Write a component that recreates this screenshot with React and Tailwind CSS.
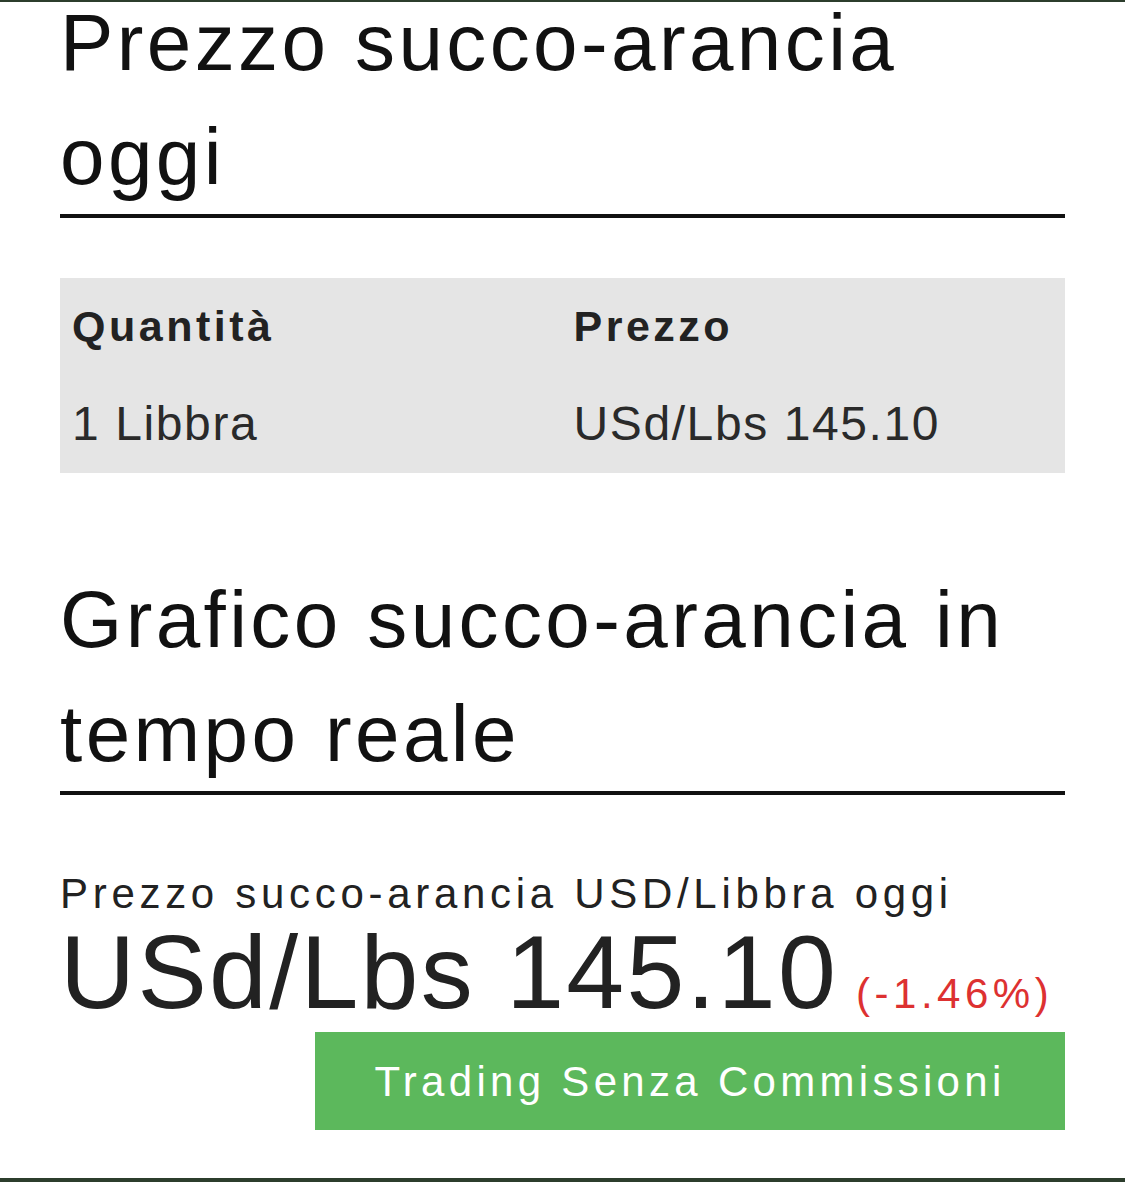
export default function App() {
  return (
    <div className="min-h-[1182px] bg-white flex flex-col font-['Liberation_Sans',Arial,sans-serif] overflow-hidden">
      <div className="h-[2px] bg-[#2c3d2c] relative z-10" />
      <div className="px-[60px] flex flex-col">
        <h1 className="-mt-[16px] text-[80px] leading-[114px] tracking-[3.4px] text-[#111] font-normal border-b-[4px] border-[#111]">
          Prezzo succo-arancia oggi
        </h1>

        <div className="mt-[60px] grid grid-cols-2 bg-[#e5e5e5] text-[#222]">
          <div className="px-[12px] h-[97px] leading-[97px] text-[43px] font-bold tracking-[3.5px]">Quantità</div>
          <div className="px-[11px] h-[97px] leading-[97px] text-[43px] font-bold tracking-[3.5px]">Prezzo</div>
          <div className="px-[12px] h-[98px] leading-[98px] text-[48px] tracking-[1.6px] text-[#2a2a2a]">1 Libbra</div>
          <div className="px-[11px] h-[98px] leading-[98px] text-[48px] tracking-[1.6px] text-[#2a2a2a]">USd/Lbs 145.10</div>
        </div>

        <h2 className="mt-[90px] text-[80px] leading-[114px] tracking-[3.4px] text-[#111] font-normal border-b-[4px] border-[#111]">
          Grafico succo-arancia in tempo reale
        </h2>

        <div className="mt-[74px] text-[42px] leading-[50px] tracking-[4.7px] text-[#222]">
          Prezzo succo-arancia USD/Libbra oggi
        </div>
        <div className="text-[104px] leading-[106px] tracking-[2.3px] text-[#222] whitespace-nowrap">
          USd/Lbs 145.10
          <span className="ml-[18px] text-[42px] leading-none tracking-[4.5px] text-[#dd3131]">(-1.46%)</span>
        </div>
        <div className="mt-[7px] ml-auto w-[750px] h-[98px] bg-[#5cb85c] flex items-center justify-center text-white text-[42px] tracking-[4.3px]">
          Trading Senza Commissioni
        </div>
      </div>
      <div className="mt-auto h-[4px] bg-[#2c3d2c]" />
    </div>
  );
}
